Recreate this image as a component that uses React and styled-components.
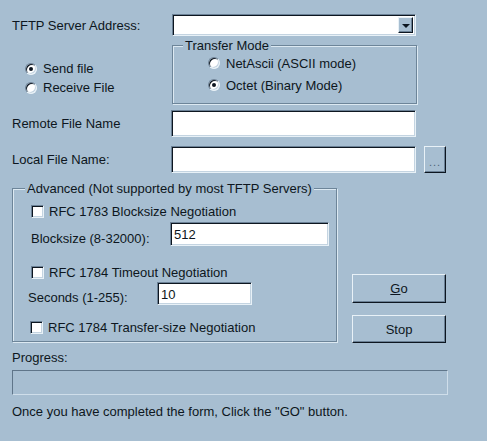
import React from 'react';
import styled, { createGlobalStyle, css } from 'styled-components';

const Global = createGlobalStyle`
  html, body {
    margin: 0;
    padding: 0;
    background: #a7bed1;
  }
  body {
    font-family: "Liberation Sans", Arial, sans-serif;
    font-size: 13px;
    color: #0d1620;
  }
`;

const BG = '#a7bed1';
const DARK = '#6b8196';
const LIGHT = '#e8f1f7';
const INK = '#0d1620';

const sunken = css`
  box-sizing: border-box;
  border: 1px solid;
  border-color: ${DARK} ${LIGHT} ${LIGHT} ${DARK};
  box-shadow: inset 1px 1px 0 ${INK}, inset -1px -1px 0 #c4d4e1;
`;

const raised = css`
  box-sizing: border-box;
  border: 1px solid;
  border-color: ${LIGHT} ${INK} ${INK} ${LIGHT};
  box-shadow: inset -1px -1px 0 ${DARK};
  background: ${BG};
`;

const Dialog = styled.div`
  width: 487px;
  height: 441px;
  box-sizing: border-box;
  padding: 14px 0 0 12px;
  background: ${BG};
`;

const Row = styled.div`
  display: flex;
  align-items: ${p => p.$align || 'center'};
  margin-top: ${p => p.$top || 0}px;
`;

const Label = styled.div`
  flex: none;
  width: ${p => (p.$w ? `${p.$w}px` : 'auto')};
  line-height: 15px;
  white-space: nowrap;
  padding-top: ${p => p.$pt || 0}px;
  margin-left: ${p => p.$ml || 0}px;
`;

const TextBox = styled.input`
  ${sunken};
  flex: none;
  width: ${p => p.$w}px;
  height: ${p => p.$h}px;
  margin: 0;
  padding: 1px 3px 0;
  background: #fff;
  font: inherit;
  color: ${INK};
  outline: none;
`;

const Combo = styled.div`
  ${sunken};
  width: 244px;
  height: 22px;
  background: #fff;
  display: flex;
  justify-content: flex-end;
  padding: 2px;
`;

const DropButton = styled.div`
  ${raised};
  width: 15px;
  height: 100%;
  display: flex;
  align-items: center;
  justify-content: center;
`;

const Arrow = styled.span`
  width: 0;
  height: 0;
  border-left: 4px solid transparent;
  border-right: 4px solid transparent;
  border-top: 4px solid ${INK};
  margin-top: 1px;
`;

const Group = styled.div`
  position: relative;
  flex: none;
  box-sizing: border-box;
  width: ${p => p.$w}px;
  border: 1px solid #6d8599;
  box-shadow: inset 1px 1px 0 #dce9f2, 1px 1px 0 #dce9f2;
  padding: ${p => p.$pad};
`;

const GroupTitle = styled.span`
  position: absolute;
  top: -8px;
  left: ${p => p.$left}px;
  padding: 0 2px;
  line-height: 15px;
  background: ${BG};
  white-space: nowrap;
`;

const RadioColumn = styled.div`
  flex: none;
  width: 160px;
  box-sizing: border-box;
  padding: 14px 0 0 13px;
`;

const OptionRow = styled.label`
  display: flex;
  align-items: center;
  gap: ${p => p.$gap || 6}px;
  height: ${p => p.$h}px;
  line-height: 15px;
  white-space: nowrap;
  margin-top: ${p => p.$top || 0}px;
  margin-left: ${p => p.$ml || 0}px;
`;

const Radio = styled.span`
  position: relative;
  flex: none;
  width: 12px;
  height: 12px;
  box-sizing: border-box;
  border-radius: 50%;
  border: 1px solid;
  border-color: ${DARK} ${LIGHT} ${LIGHT} ${DARK};
  box-shadow: inset 1px 1px 0 ${INK}, inset -1px -1px 0 #c4d4e1;
  background: #fff;
  &::after {
    content: '';
    display: ${p => (p.$on ? 'block' : 'none')};
    position: absolute;
    left: 3px;
    top: 3px;
    width: 4px;
    height: 4px;
    border-radius: 50%;
    background: ${INK};
  }
`;

const Check = styled.span`
  ${sunken};
  flex: none;
  width: 13px;
  height: 13px;
  background: #fff;
`;

const Button = styled.div`
  ${raised};
  width: ${p => p.$w}px;
  height: ${p => p.$h}px;
  margin-top: ${p => p.$top || 0}px;
  display: flex;
  align-items: center;
  justify-content: center;
  line-height: 15px;
`;

const Dots = styled.span`
  font-size: 11px;
  color: #4d6377;
  letter-spacing: 1px;
  margin-top: 6px;
`;

const ButtonColumn = styled.div`
  display: flex;
  flex-direction: column;
  margin: 86px 0 0 15px;
`;

const Progress = styled.div`
  box-sizing: border-box;
  width: 436px;
  height: 25px;
  margin-top: 5px;
  border: 1px solid;
  border-color: #5f7589 #cfdeea #cfdeea #5f7589;
`;

const Note = styled.div`
  line-height: 15px;
  margin-top: ${p => p.$top || 0}px;
  white-space: nowrap;
`;

export default function App() {
  return (
    <Dialog>
      <Global />
      <Row>
        <Label $w={160}>TFTP Server Address:</Label>
        <Combo>
          <DropButton>
            <Arrow />
          </DropButton>
        </Combo>
      </Row>

      <Row $align="flex-start" $top={9}>
        <RadioColumn>
          <OptionRow $h={19}>
            <Radio $on />
            Send file
          </OptionRow>
          <OptionRow $h={19}>
            <Radio />
            Receive File
          </OptionRow>
        </RadioColumn>
        <Group $w={245} $pad="6px 0 7px 35px">
          <GroupTitle $left={10}>Transfer Mode</GroupTitle>
          <OptionRow $h={22}>
            <Radio />
            NetAscii (ASCII mode)
          </OptionRow>
          <OptionRow $h={22}>
            <Radio $on />
            Octet (Binary Mode)
          </OptionRow>
        </Group>
      </Row>

      <Row $top={6}>
        <Label $w={159}>Remote File Name</Label>
        <TextBox $w={245} $h={27} readOnly value="" />
      </Row>

      <Row $top={9}>
        <Label $w={159}>Local File Name:</Label>
        <TextBox $w={245} $h={27} readOnly value="" />
        <Button $w={22} $h={27} style={{ marginLeft: 8 }}>
          <Dots>...</Dots>
        </Button>
      </Row>

      <Row $align="flex-start" $top={15}>
        <Group $w={325} $pad="14px 0 6px 18px">
          <GroupTitle $left={12}>Advanced (Not supported by most TFTP Servers)</GroupTitle>
          <OptionRow $h={16} $gap={5}>
            <Check />
            RFC 1783 Blocksize Negotiation
          </OptionRow>
          <Row $align="flex-start" $top={3}>
            <Label $w={139} $pt={9}>Blocksize (8-32000):</Label>
            <TextBox $w={159} $h={24} readOnly value="512" />
          </Row>
          <OptionRow $h={16} $gap={5} $top={18}>
            <Check />
            RFC 1784 Timeout Negotiation
          </OptionRow>
          <Row $align="flex-start" $top={2}>
            <Label $w={129} $pt={8} $ml={-3}>Seconds (1-255):</Label>
            <TextBox $w={95} $h={23} readOnly value="10" />
          </Row>
          <OptionRow $h={16} $gap={5} $top={14} $ml={-1}>
            <Check />
            RFC 1784 Transfer-size Negotiation
          </OptionRow>
        </Group>
        <ButtonColumn>
          <Button $w={94} $h={29}>
            <span><u>G</u>o</span>
          </Button>
          <Button $w={94} $h={28} $top={12}>
            Stop
          </Button>
        </ButtonColumn>
      </Row>

      <Note $top={7}>Progress:</Note>
      <Progress />
      <Note $top={9}>Once you have completed the form, Click the "GO" button.</Note>
    </Dialog>
  );
}
